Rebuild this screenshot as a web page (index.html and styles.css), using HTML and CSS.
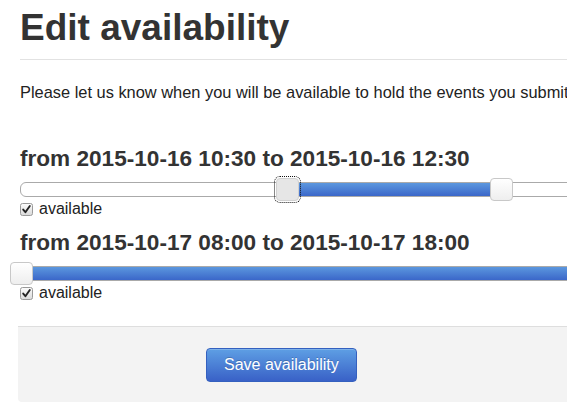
FILE: index.html
```html
<!DOCTYPE html>
<html>
<head>
<meta charset="utf-8">
<title>Edit availability</title>
<link rel="stylesheet" href="styles.css">
</head>
<body>
<div class="page">
  <div class="page-header"><h1>Edit availability</h1></div>
  <p class="intro">Please let us know when you will be available to hold the events you submitted.</p>
  <form class="avail-form">
    <div class="slot">
      <h3>from 2015-10-16 10:30 to 2015-10-16 12:30</h3>
      <div class="track rounded">
        <div class="range" style="left:25%;width:20.2%"></div>
        <span class="handle focus" style="left:25%"></span>
        <span class="handle" style="left:45.2%"></span>
      </div>
      <label class="check">
        <svg class="box" width="13" height="13" viewBox="0 0 13 13"><defs><linearGradient id="g1" x1="0" y1="0" x2="0" y2="1"><stop offset="0" stop-color="#fdfdfd"/><stop offset="1" stop-color="#d9d9d9"/></linearGradient></defs><rect x="0.5" y="0.5" width="12" height="12" rx="2" fill="url(#g1)" stroke="#9a9a9a"/><path d="M3.2 6.6 L5.4 9.2 L9.8 3" fill="none" stroke="#222" stroke-width="1.9" stroke-linecap="round" stroke-linejoin="round"/></svg>
        <span>available</span>
      </label>
    </div>
    <div class="slot">
      <h3>from 2015-10-17 08:00 to 2015-10-17 18:00</h3>
      <div class="track">
        <div class="range" style="left:0%;width:100%"></div>
        <span class="handle" style="left:0%"></span>
        <span class="handle" style="left:100%"></span>
      </div>
      <label class="check">
        <svg class="box" width="13" height="13" viewBox="0 0 13 13"><defs><linearGradient id="g2" x1="0" y1="0" x2="0" y2="1"><stop offset="0" stop-color="#fdfdfd"/><stop offset="1" stop-color="#d9d9d9"/></linearGradient></defs><rect x="0.5" y="0.5" width="12" height="12" rx="2" fill="url(#g2)" stroke="#9a9a9a"/><path d="M3.2 6.6 L5.4 9.2 L9.8 3" fill="none" stroke="#222" stroke-width="1.9" stroke-linecap="round" stroke-linejoin="round"/></svg>
        <span>available</span>
      </label>
    </div>
    <div class="actions">
      <button type="button" class="btn-primary">Save availability</button>
    </div>
  </form>
</div>
</body>
</html>
```

FILE: styles.css
```css
html, body {
  margin: 0;
  overflow: hidden;
  background: #fff;
}
body {
  font-family: "Liberation Sans", Arial, Helvetica, sans-serif;
  color: #333;
}
.page {
  width: 1066px;
  padding: 0 20px;
}
.page-header {
  margin-top: 8px;
  padding-bottom: 11px;
  border-bottom: 1px solid #e2e2e2;
}
.page-header h1 {
  margin: 0;
  font-size: 37px;
  line-height: 40px;
  font-weight: bold;
  color: #333;
}
.intro {
  margin: 22px 0 0;
  font-size: 16.4px;
  line-height: 20px;
  color: #222;
  white-space: nowrap;
}
.avail-form {
  margin-top: 44px;
}
.slot {
  margin-bottom: 12px;
}
.slot h3 {
  margin: 0 0 10px;
  font-size: 22.6px;
  line-height: 26px;
  font-weight: bold;
  color: #333;
}
.track {
  position: relative;
  height: 13px;
  border: 1px solid #aaa;
  background: #fff;
}
.track.rounded {
  border-radius: 6px 0 0 6px;
}
.range {
  position: absolute;
  top: 0;
  bottom: 0;
  background: linear-gradient(#5b97de, #3b67c9);
}
.handle {
  position: absolute;
  top: -5px;
  width: 21px;
  height: 21px;
  margin-left: -11.5px;
  border: 1px solid #c8c8c8;
  border-radius: 4px;
  background: linear-gradient(#ffffff, #eeeeee);
  box-sizing: content-box;
}
.handle.focus {
  background: #e6e6e6;
  border-color: #d0d0d0;
  outline: 1px dotted #111;
  outline-offset: 1px;
}
.check {
  display: flex;
  align-items: center;
  gap: 6px;
  margin-top: 3px;
  height: 18px;
  font-size: 16px;
  line-height: 18px;
  color: #222;
}
.box {
  flex: none;
}
.actions {
  margin-top: 24px;
  margin-left: -2px;
  padding: 21px 0 20px 188px;
  background: #f3f3f3;
  border-top: 1px solid #dedede;
  border-radius: 0 0 0 4px;
}
.btn-primary {
  font-family: "Liberation Sans", Arial, Helvetica, sans-serif;
  font-size: 16px;
  line-height: 18px;
  padding: 7px 17px;
  color: #fff;
  border: 1px solid #3460bf;
  border-radius: 4px;
  background: linear-gradient(#5e9fe4, #3961c7);
  text-shadow: 0 -1px 0 rgba(0, 0, 0, 0.2);
  box-shadow: inset 0 1px 0 rgba(255, 255, 255, 0.2);
  cursor: pointer;
}
```
